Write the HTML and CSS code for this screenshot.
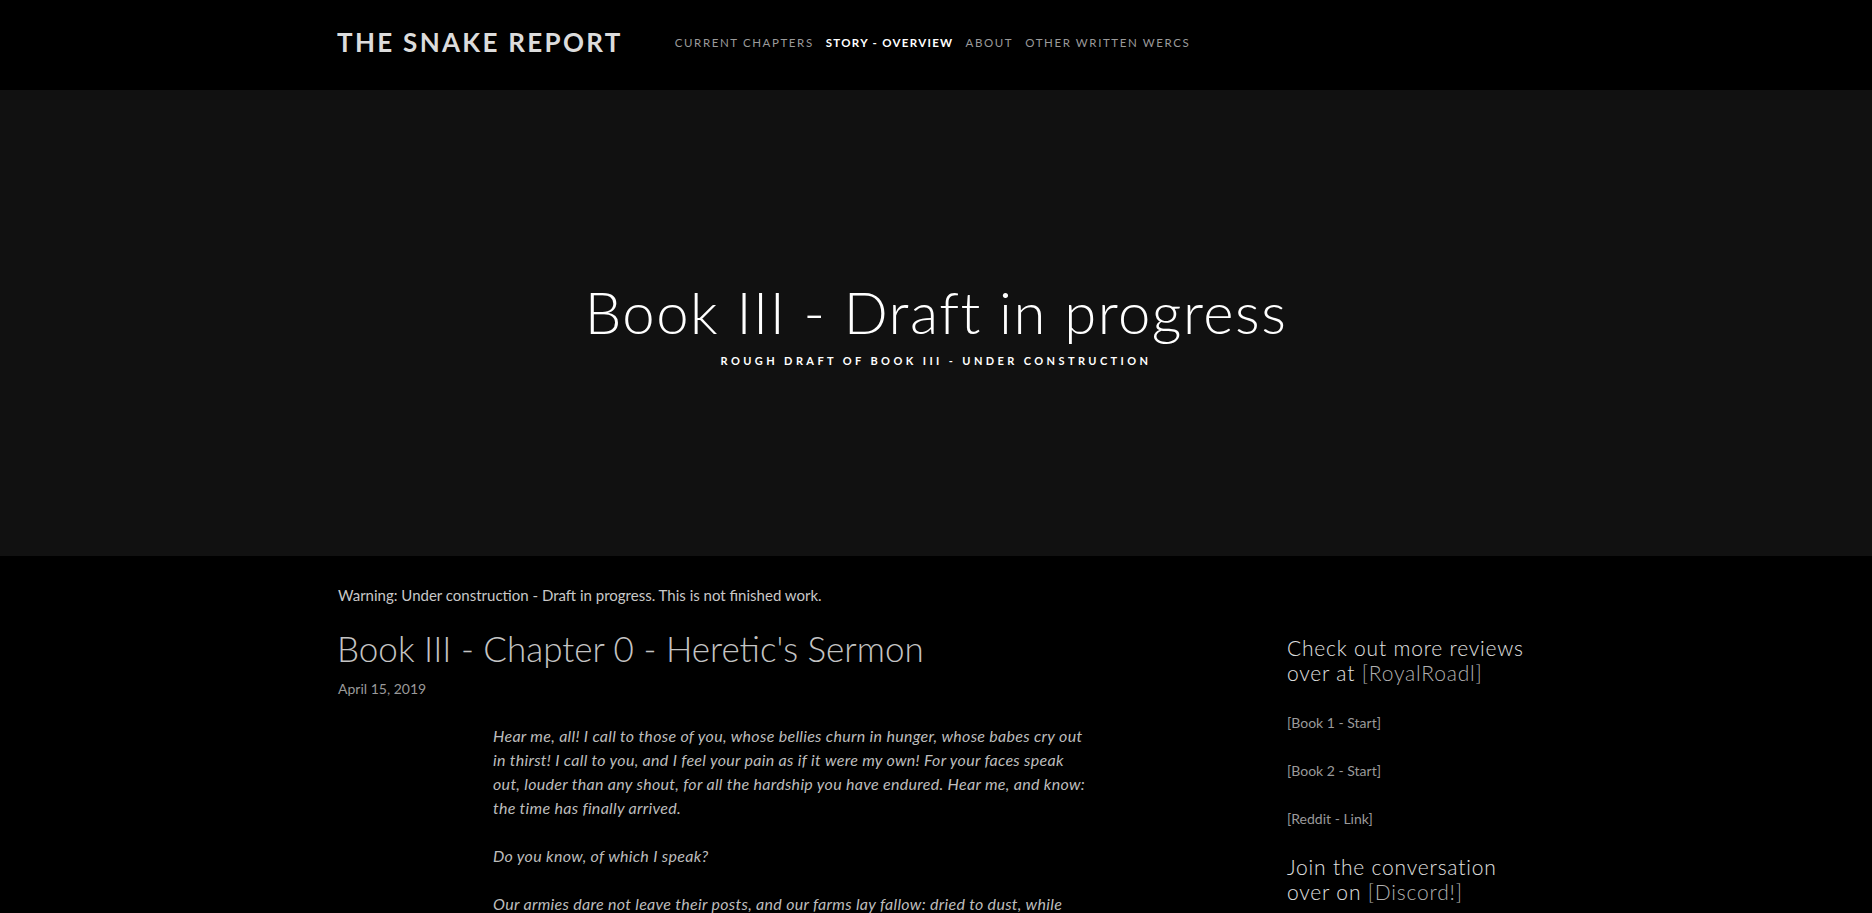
FILE: index.html
```html
<!DOCTYPE html>
<html lang="en">
<head>
<meta charset="utf-8">
<title>Book III - Draft in progress | The Snake Report</title>
<link rel="stylesheet" href="styles.css">
</head>
<body>
<header class="site-header">
  <div class="container header-inner">
    <a class="logo" href="#">THE SNAKE REPORT</a>
    <nav class="main-nav">
      <a href="#" class="nav-link">CURRENT CHAPTERS</a>
      <a href="#" class="nav-link active">STORY - OVERVIEW</a>
      <a href="#" class="nav-link">ABOUT</a>
      <a href="#" class="nav-link">OTHER WRITTEN WERCS</a>
    </nav>
  </div>
</header>

<section class="hero">
  <h1 class="hero-title">Book III - Draft in progress</h1>
  <p class="hero-sub">ROUGH DRAFT OF BOOK III - UNDER CONSTRUCTION</p>
</section>

<div class="container page">
  <main class="main-col">
    <p class="warning">Warning: Under construction - Draft in progress. This is not finished work.</p>
    <article class="post">
      <h2 class="post-title">Book III - Chapter 0 - Heretic's Sermon</h2>
      <div class="post-date">April 15, 2019</div>
      <div class="post-body">
        <p>Hear me, all! I call to those of you, whose bellies churn in hunger, whose babes cry out in thirst! I call to you, and I feel your pain as if it were my own! For your faces speak out, louder than any shout, for all the hardship you have endured. Hear me, and know: the time has finally arrived.</p>
        <p>Do you know, of which I speak?</p>
        <p>Our armies dare not leave their posts, and our farms lay fallow: dried to dust, while</p>
      </div>
    </article>
  </main>
  <aside class="sidebar">
    <h3 class="side-head">Check out more reviews<br>over at <a href="#" class="side-inline">[RoyalRoadl]</a></h3>
    <a href="#" class="side-link">[Book 1 - Start]</a>
    <a href="#" class="side-link">[Book 2 - Start]</a>
    <a href="#" class="side-link">[Reddit - Link]</a>
    <h3 class="side-head">Join the conversation<br>over on <a href="#" class="side-inline">[Discord!]</a></h3>
  </aside>
</div>
</body>
</html>
```

FILE: styles.css
```css
html, body {
  margin: 0;
  padding: 0;
  background: #000;
  color: #ccc;
  font-family: "Lato", "Open Sans", sans-serif;
}

a { text-decoration: none; color: inherit; }

.container {
  width: 1200px;
  margin: 0 auto;
}

.site-header {
  height: 90px;
  background: #000;
}

.header-inner {
  height: 84px;
  display: flex;
  align-items: center;
}

.logo {
  font-size: 26px;
  font-weight: 700;
  letter-spacing: 2.3px;
  color: #dcdcdc;
  margin-left: 1px;
}

.main-nav {
  display: flex;
  gap: 12px;
  margin-left: 52px;
  padding-top: 1px;
}

.nav-link {
  font-size: 11.5px;
  font-weight: 400;
  letter-spacing: 1.6px;
  color: #9a9a9a;
}

.nav-link.active {
  color: #fff;
  font-weight: 700;
  letter-spacing: 1.3px;
}

.hero {
  height: 466px;
  background: #111;
  display: flex;
  flex-direction: column;
  align-items: center;
  justify-content: center;
}

.hero-title {
  margin: 0;
  font-size: 58px;
  font-weight: 300;
  letter-spacing: 1.5px;
  line-height: 64px;
  color: #fff;
}

.hero-sub {
  margin: 10px 0 0;
  font-size: 11px;
  font-weight: 700;
  letter-spacing: 3.4px;
  color: #fff;
}

.page {
  display: grid;
  grid-template-columns: 900px 1fr;
  padding-top: 30px;
}

.warning {
  margin: 0 0 22px 2px;
  font-size: 15px;
  color: #c8c8c8;
}

.post-title {
  margin: 0 0 0 1px;
  font-size: 35px;
  font-weight: 300;
  color: #c4c4c4;
  line-height: 44px;
}

.post-date {
  margin: 10px 0 0 2px;
  font-size: 14px;
  color: #9a9a9a;
}

.post-body {
  width: 598px;
  margin: 27px 0 0 157px;
  font-size: 16px;
  font-style: italic;
  font-weight: 400;
  letter-spacing: 0.3px;
  line-height: 24px;
  color: #bdbdbd;
}

.post-body p {
  margin: 0 0 24px;
}

.sidebar {
  padding-left: 51px;
  padding-top: 49px;
  display: flex;
  flex-direction: column;
  align-items: flex-start;
}

.side-head {
  margin: 0;
  font-size: 21px;
  font-weight: 300;
  letter-spacing: 0.8px;
  line-height: 25px;
  color: #e0e0e0;
}

.side-inline {
  color: #b0b0b0;
}

.side-link {
  font-size: 14px;
  color: #9a9a9a;
  line-height: 20px;
  margin-top: 28px;
}

.side-link + .side-head {
  margin-top: 25px;
}
```
